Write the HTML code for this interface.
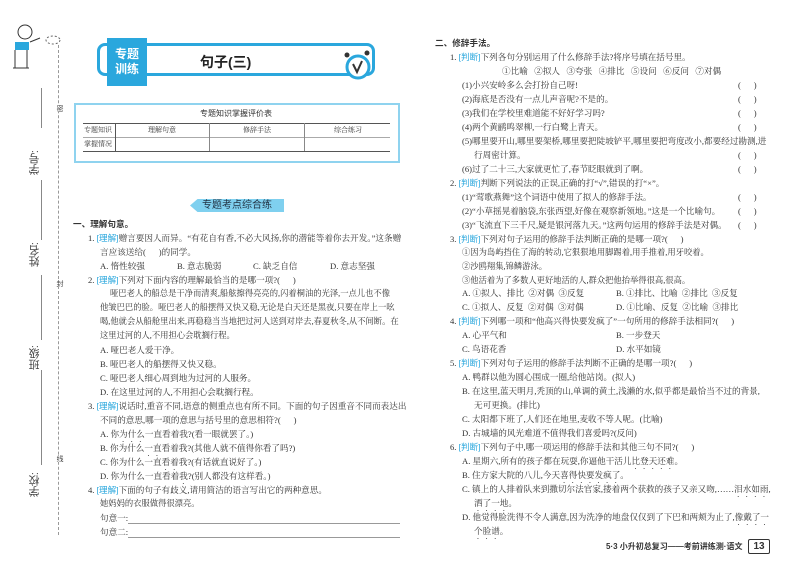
<!DOCTYPE html>
<html><head><meta charset="utf-8"><style>
body{margin:0;width:800px;height:571px;background:#fff;position:relative;overflow:hidden;font-family:"Liberation Serif","Noto Serif CJK SC",serif;color:#333;}
.l{position:absolute;white-space:nowrap;font-size:8.6px;line-height:14px;}
.s{font-family:"Liberation Sans","Noto Sans CJK SC",sans-serif;font-weight:bold;}
.t{color:#2aa7dd;font-family:"Liberation Sans","Noto Sans CJK SC",sans-serif;}
.d{text-emphasis:dot;text-emphasis-position:under;-webkit-text-emphasis:dot;-webkit-text-emphasis-position:under;}
.r{position:absolute;left:738px;font-size:8.6px;line-height:14px;white-space:pre;}
.v{position:absolute;writing-mode:vertical-rl;transform:rotate(180deg);font-family:"Liberation Sans","Noto Sans CJK SC",sans-serif;font-size:11px;color:#444;}
.v2{position:absolute;writing-mode:vertical-rl;font-family:"Liberation Sans","Noto Sans CJK SC",sans-serif;color:#444;}
</style></head><body>
<!-- sidebar -->
<div style="position:absolute;left:58px;top:45px;height:490px;border-left:1px dashed #999"></div>
<div style="position:absolute;left:41px;top:88px;height:40px;border-left:1px solid #888"></div>
<div style="position:absolute;left:41px;top:180px;height:60px;border-left:1px solid #888"></div>
<div style="position:absolute;left:41px;top:275px;height:65px;border-left:1px solid #888"></div>
<div style="position:absolute;left:41px;top:370px;height:95px;border-left:1px solid #888"></div>
<div class="v" style="left:27px;top:150px">学号:</div>
<div class="v" style="left:27px;top:242px">姓名:</div>
<div class="v" style="left:27px;top:345px">班级:</div>
<div class="v" style="left:27px;top:472px">学校:</div>
<div class="v2" style="left:54px;top:105px;font-size:7px;background:#fff">密</div>
<div class="v2" style="left:54px;top:280px;font-size:7px;background:#fff">封</div>
<div class="v2" style="left:54px;top:455px;font-size:7px;background:#fff">线</div>
<svg style="position:absolute;left:5px;top:20px" width="60" height="50"><circle cx="20" cy="12" r="7" fill="none" stroke="#333"/><rect x="10" y="22" width="14" height="8" fill="#2aa7dd"/><path d="M10 30v18M22 30v18M8 48h16M25 22l10-4" stroke="#333" fill="none"/><ellipse cx="48" cy="20" rx="7" ry="4" fill="none" stroke="#666" stroke-dasharray="2 2"/></svg>
<!-- banner -->
<div style="position:absolute;left:97px;top:43px;width:278px;height:33px;border:3px solid #2aa7dd;border-radius:8px;box-sizing:border-box"></div>
<div class="s" style="position:absolute;left:107px;top:38px;width:40px;height:48px;background:#2aa7dd;color:#fff;font-size:12px;line-height:15px;text-align:center;padding-top:9px;box-sizing:border-box">专题<br>训练</div>
<div class="s" style="position:absolute;left:200px;top:52px;font-size:14px;color:#222">句子(三)</div>
<svg style="position:absolute;left:340px;top:50px" width="34" height="30"><circle cx="18" cy="17" r="11" fill="#fff" stroke="#2aa7dd" stroke-width="3"/><path d="M13 14l4 8 5-11" stroke="#333" stroke-width="2" fill="none"/><circle cx="7" cy="5" r="2.5" fill="#333"/><circle cx="27" cy="3" r="2.5" fill="#333"/></svg>
<!-- table -->
<div style="position:absolute;left:74px;top:103px;width:326px;height:60px;border:2px solid #8fd3ef;box-sizing:border-box"></div>
<div class="l s" style="left:200px;top:107px;font-size:8px;font-weight:normal">专题知识掌握评价表</div>
<div style="position:absolute;left:83px;top:123px;width:307px;border-top:1px solid #555"></div>
<div style="position:absolute;left:83px;top:137px;width:307px;border-top:1px solid #aaa"></div>
<div style="position:absolute;left:83px;top:151px;width:307px;border-top:1px solid #555"></div>
<div style="position:absolute;left:115px;top:123px;height:28px;border-left:1px solid #555"></div>
<div style="position:absolute;left:209px;top:123px;height:28px;border-left:1px solid #888"></div>
<div style="position:absolute;left:304px;top:123px;height:28px;border-left:1px solid #888"></div>
<div class="l" style="left:84px;top:123px;font-size:7px">专题知识</div>
<div class="l" style="left:84px;top:137px;font-size:7px">掌握情况</div>
<div class="l" style="left:148px;top:123px;font-size:7px">理解句意</div>
<div class="l" style="left:243px;top:123px;font-size:7px">修辞手法</div>
<div class="l" style="left:334px;top:123px;font-size:7px">综合练习</div>
<div class="s" style="position:absolute;left:190px;top:199px;width:94px;height:13px;background:#7fd0ef;font-size:10px;line-height:13px;text-align:center;color:#234;font-weight:normal;clip-path:polygon(8% 0,100% 0,100% 100%,8% 100%,0 50%)">专题考点综合练</div>
<!-- left column -->
<div class="l s" style="left:73px;top:217px">一、理解句意。</div>
<div class="l" style="left:88px;top:231px">1. <span class="t">[理解]</span>赠言要因人而异。“有花自有香,不必大风扬,你的潜能等着你去开发。”这条赠</div>
<div class="l" style="left:100px;top:245px">言应该送给(&nbsp;&nbsp;&nbsp;&nbsp;&nbsp;&nbsp;)的同学。</div>
<div class="l" style="left:100px;top:259px">A. 惰性较强</div><div class="l" style="left:177px;top:259px">B. 意志脆弱</div><div class="l" style="left:253px;top:259px">C. 缺乏自信</div><div class="l" style="left:330px;top:259px">D. 意志坚强</div>
<div class="l" style="left:88px;top:273px">2. <span class="t">[理解]</span>下列对下面内容的理解最恰当的是哪一项?(&nbsp;&nbsp;&nbsp;&nbsp;&nbsp;&nbsp;)</div>
<div class="l" style="left:110px;top:287px;font-size:8.3px">哑巴老人的船总是干净而清爽,船舷擦得亮亮的,闪着桐油的光泽,一点儿也不像</div>
<div class="l" style="left:100px;top:301px;font-size:8.3px">他皱巴巴的脸。哑巴老人的船摆得又快又稳,无论是白天还是黑夜,只要在岸上一吆</div>
<div class="l" style="left:100px;top:315px;font-size:8.3px">喝,他就会从船舱里出来,再稳稳当当地把过河人送到对岸去,春夏秋冬,从不间断。在</div>
<div class="l" style="left:100px;top:329px;font-size:8.3px">这里过河的人,不用担心会耽搁行程。</div>
<div class="l" style="left:100px;top:343px">A. 哑巴老人爱干净。</div>
<div class="l" style="left:100px;top:357px">B. 哑巴老人的船摆得又快又稳。</div>
<div class="l" style="left:100px;top:371px">C. 哑巴老人细心周到地为过河的人服务。</div>
<div class="l" style="left:100px;top:385px">D. 在这里过河的人,不用担心会耽搁行程。</div>
<div class="l" style="left:88px;top:399px">3. <span class="t">[理解]</span>说话时,重音不同,语意的侧重点也有所不同。下面的句子因重音不同而表达出</div>
<div class="l" style="left:100px;top:413px">不同的意思,哪一项的意思与括号里的意思相符?(&nbsp;&nbsp;&nbsp;&nbsp;&nbsp;&nbsp;)</div>
<div class="l" style="left:100px;top:427px">A. 你<span class="d">为什么</span>一直看着我?(看一眼就罢了。)</div>
<div class="l" style="left:100px;top:441px">B. 你为什么<span class="d">一直</span>看着我?(其他人就不值得你看了吗?)</div>
<div class="l" style="left:100px;top:455px">C. 你为什么一直<span class="d">看着</span>我?(有话就直说好了。)</div>
<div class="l" style="left:100px;top:469px">D. 你为什么一直看着<span class="d">我</span>?(别人都没有这样看。)</div>
<div class="l" style="left:88px;top:483px">4. <span class="t">[理解]</span>下面的句子有歧义,请用简洁的语言写出它的两种意思。</div>
<div class="l" style="left:100px;top:497px;font-size:8.3px">她妈妈的衣服做得很漂亮。</div>
<div class="l" style="left:100px;top:511px">句意一:</div><div style="position:absolute;left:128px;top:523px;width:272px;border-top:1px solid #999"></div>
<div class="l" style="left:100px;top:525px">句意二:</div><div style="position:absolute;left:128px;top:537px;width:272px;border-top:1px solid #999"></div>
<!-- right column -->
<div class="l s" style="left:435px;top:36px">二、修辞手法。</div>
<div class="l" style="left:450px;top:50px">1. <span class="t">[判断]</span>下列各句分别运用了什么修辞手法?将序号填在括号里。</div>
<div class="l" style="left:502px;top:64px">①比喻&nbsp;&nbsp;&nbsp;②拟人&nbsp;&nbsp;&nbsp;③夸张&nbsp;&nbsp;&nbsp;④排比&nbsp;&nbsp;&nbsp;⑤设问&nbsp;&nbsp;&nbsp;⑥反问&nbsp;&nbsp;&nbsp;⑦对偶</div>
<div class="l" style="left:462px;top:78px">(1)小兴安岭多么会打扮自己呀!</div><div class="r" style="top:78px">(      )</div>
<div class="l" style="left:462px;top:92px">(2)海底是否没有一点儿声音呢?不是的。</div><div class="r" style="top:92px">(      )</div>
<div class="l" style="left:462px;top:106px">(3)我们在学校里难道能不好好学习吗?</div><div class="r" style="top:106px">(      )</div>
<div class="l" style="left:462px;top:120px">(4)两个黄鹂鸣翠柳,一行白鹭上青天。</div><div class="r" style="top:120px">(      )</div>
<div class="l" style="left:462px;top:134px">(5)哪里要开山,哪里要架桥,哪里要把陡坡铲平,哪里要把弯度改小,都要经过勘测,进</div>
<div class="l" style="left:474px;top:148px">行周密计算。</div><div class="r" style="top:148px">(      )</div>
<div class="l" style="left:462px;top:162px">(6)过了二十三,大家就更忙了,春节眨眼就到了啊。</div><div class="r" style="top:162px">(      )</div>
<div class="l" style="left:450px;top:176px">2. <span class="t">[判断]</span>判断下列说法的正误,正确的打“√”,错误的打“×”。</div>
<div class="l" style="left:462px;top:190px">(1)“莺歌燕舞”这个词语中使用了拟人的修辞手法。</div><div class="r" style="top:190px">(      )</div>
<div class="l" style="left:462px;top:204px">(2)“小草摇晃着脑袋,东张西望,好像在观察新领地。”这是一个比喻句。</div><div class="r" style="top:204px">(      )</div>
<div class="l" style="left:462px;top:218px">(3)“飞流直下三千尺,疑是银河落九天。”这两句运用的修辞手法是对偶。</div><div class="r" style="top:218px">(      )</div>
<div class="l" style="left:450px;top:232px">3. <span class="t">[判断]</span>下列对句子运用的修辞手法判断正确的是哪一项?(&nbsp;&nbsp;&nbsp;&nbsp;&nbsp;&nbsp;)</div>
<div class="l" style="left:462px;top:246px;font-size:8.3px">①因为岛屿挡住了海的转动,它狠狠地用脚踢着,用手推着,用牙咬着。</div>
<div class="l" style="left:462px;top:260px;font-size:8.3px">②沙鸥翔集,锦鳞游泳。</div>
<div class="l" style="left:462px;top:274px;font-size:8.3px">③他活着为了多数人更好地活的人,群众把他抬举得很高,很高。</div>
<div class="l" style="left:462px;top:286px">A. ①拟人、排比&nbsp;&nbsp;②对偶&nbsp;&nbsp;③反复</div><div class="l" style="left:616px;top:286px">B. ①排比、比喻&nbsp;&nbsp;②排比&nbsp;&nbsp;③反复</div>
<div class="l" style="left:462px;top:300px">C. ①拟人、反复&nbsp;&nbsp;②对偶&nbsp;&nbsp;③对偶</div><div class="l" style="left:616px;top:300px">D. ①比喻、反复&nbsp;&nbsp;②比喻&nbsp;&nbsp;③排比</div>
<div class="l" style="left:450px;top:314px">4. <span class="t">[判断]</span>下列哪一项和“他高兴得快要发疯了”一句所用的修辞手法相同?(&nbsp;&nbsp;&nbsp;&nbsp;&nbsp;&nbsp;)</div>
<div class="l" style="left:462px;top:328px">A. 心平气和</div><div class="l" style="left:616px;top:328px">B. 一步登天</div>
<div class="l" style="left:462px;top:342px">C. 鸟语花香</div><div class="l" style="left:616px;top:342px">D. 水平如镜</div>
<div class="l" style="left:450px;top:356px">5. <span class="t">[判断]</span>下列对句子运用的修辞手法判断不正确的是哪一项?(&nbsp;&nbsp;&nbsp;&nbsp;&nbsp;&nbsp;)</div>
<div class="l" style="left:462px;top:370px">A. 鸭群以他为圆心围成一圈,给他站岗。(拟人)</div>
<div class="l" style="left:462px;top:384px">B. 在这里,蓝天明月,秃顶的山,单调的黄土,浅濑的水,似乎都是最恰当不过的背景,</div>
<div class="l" style="left:474px;top:398px">无可更换。(排比)</div>
<div class="l" style="left:462px;top:412px">C. 太阳都下班了,人们还在地里,麦收不等人呢。(比喻)</div>
<div class="l" style="left:462px;top:426px">D. 古城墙的风光难道不值得我们喜爱吗?(反问)</div>
<div class="l" style="left:450px;top:440px">6. <span class="t">[判断]</span>下列句子中,哪一项运用的修辞手法和其他三句不同?(&nbsp;&nbsp;&nbsp;&nbsp;&nbsp;&nbsp;)</div>
<div class="l" style="left:462px;top:454px">A. 星期六,所有的孩子都在玩耍,你逼他干活儿<span class="d">比登天还难</span>。</div>
<div class="l" style="left:462px;top:468px">B. 住方家大院的八儿,今天<span class="d">喜得快要发疯了</span>。</div>
<div class="l" style="left:462px;top:482px">C. 镇上的人排着队来到撒切尔法官家,搂着两个获救的孩子又亲又吻,……<span class="d">泪水如雨</span>,</div>
<div class="l" style="left:474px;top:496px"><span class="d">洒了一地</span>。</div>
<div class="l" style="left:462px;top:510px">D. 他觉得脸洗得不令人满意,因为洗净的地盘仅仅到了下巴和两颊为止了,<span class="d">像戴了一</span></div>
<div class="l" style="left:474px;top:524px"><span class="d">个脸谱</span>。</div>
<div class="l s" style="left:606px;top:540px;font-size:8px">5·3 小升初总复习——考前讲练测·语文</div>
<div class="s" style="position:absolute;left:748px;top:539px;width:20px;height:13px;border:1px solid #333;border-radius:2px;font-size:10px;line-height:13px;text-align:center">13</div>
</body></html>
